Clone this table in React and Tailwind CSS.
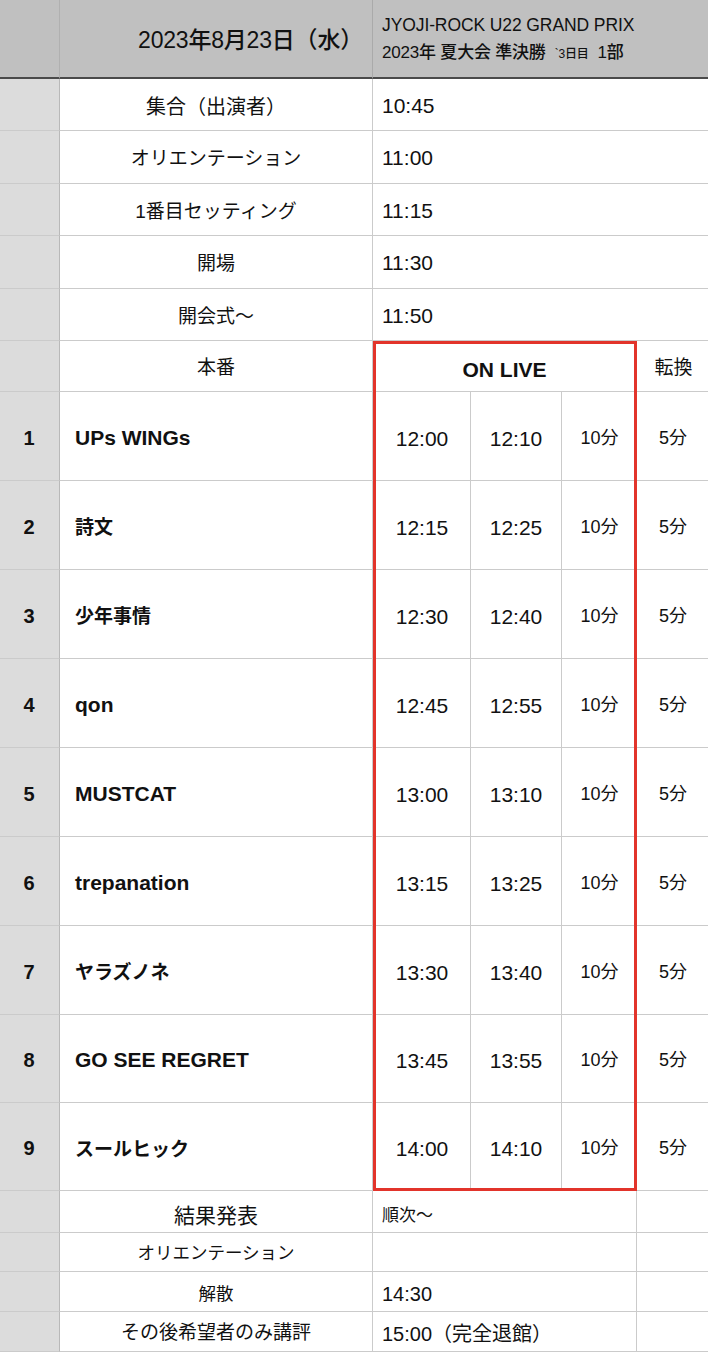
import React from "react";

const bands = [
  ["1", "UPs WINGs", "12:00", "12:10", true],
  ["2", "詩文", "12:15", "12:25", false],
  ["3", "少年事情", "12:30", "12:40", false],
  ["4", "qon", "12:45", "12:55", true],
  ["5", "MUSTCAT", "13:00", "13:10", true],
  ["6", "trepanation", "13:15", "13:25", true],
  ["7", "ヤラズノネ", "13:30", "13:40", false],
  ["8", "GO SEE REGRET", "13:45", "13:55", true],
  ["9", "スールヒック", "14:00", "14:10", false],
];

const topRows = [
  ["集合（出演者）", "text-[20px]", "10:45"],
  ["オリエンテーション", "text-[19px]", "11:00"],
  ["1番目セッティング", "text-[19px]", "11:15"],
  ["開場", "text-[19px]", "11:30"],
  ["開会式〜", "text-[19px]", "11:50"],
];

const line = "border-r border-b border-[#cbcbcb]";
const side = "bg-[#dcdcdc] border-r border-b border-r-[#b9b9b9] border-b-[#cbcbcb]";
const tmpl =
  "grid grid-cols-[60px_313px_98px_91px_75px_71px] grid-rows-[79px_52px_53px_52px_53px_52px_51px_89px_89px_89px_89px_89px_89px_89px_88px_88px_42px_39px_40px_40px]";

export default function App() {
  return (
    <div className="w-[708px] h-[1353px] bg-white text-[#111] font-['Liberation_Sans','Noto_Sans_CJK_JP',sans-serif] overflow-hidden">
      <div className="grid">
        <div className={`col-start-1 row-start-1 ${tmpl}`}>
          {/* header */}
          <div className="bg-[#c0c0c0] border-r border-r-[#b0b0b0] border-b-2 border-b-[#4a4a4a]" />
          <div className="bg-[#c0c0c0] border-r border-r-[#aaaaaa] border-b-2 border-b-[#4a4a4a] flex items-center justify-end pr-[9px] pt-[3px]">
            <span className="text-[23px] font-medium tracking-[-0.2px] whitespace-nowrap">2023年8月23日（水）</span>
          </div>
          <div className="col-span-4 bg-[#c0c0c0] border-b-2 border-b-[#4a4a4a] flex flex-col justify-center pl-[9px] pt-[3px]">
            <span className="text-[17.5px] leading-[27px] tracking-[-0.1px] whitespace-nowrap">JYOJI-ROCK U22 GRAND PRIX</span>
            <span className="text-[17px] leading-[27px] font-medium tracking-[-0.2px] whitespace-nowrap">
              2023年 夏大会 準決勝<span className="text-[12px] align-middle ml-[9px] mr-[9px]">`3日目</span>1部
            </span>
          </div>

          {topRows.map(([a, ac, b], i) => (
            <React.Fragment key={i}>
              <div className={side} />
              <div className={`${line} flex items-center justify-center whitespace-nowrap pt-[5px] ${ac}`}>{a}</div>
              <div className="col-span-4 border-b border-[#cbcbcb] flex items-center pl-[9px] pt-[2px] text-[21px]">{b}</div>
            </React.Fragment>
          ))}

          {/* 本番 row */}
          <div className={side} />
          <div className={`${line} flex items-center justify-center text-[19px] pt-[4px]`}>本番</div>
          <div className={`col-span-3 ${line} flex items-center justify-center text-[21px] font-bold pt-[7px]`}>ON LIVE</div>
          <div className="border-b border-[#cbcbcb] flex items-center justify-center text-[19px] pl-[2px] pt-[4px]">転換</div>

          {bands.map(([n, name, s, e, latin]) => (
            <React.Fragment key={n}>
              <div className={`${side} flex items-center justify-center text-[20px] font-bold pr-[1px] pt-[3px]`}>{n}</div>
              <div className={`${line} flex items-center pl-[15px] font-bold whitespace-nowrap ${latin ? "text-[21px] pt-[3px]" : "text-[19px] pt-[7px]"}`}>{name}</div>
              <div className={`${line} flex items-center justify-center text-[21px] pl-[1px] pt-[5px]`}>{s}</div>
              <div className={`${line} flex items-center justify-center text-[21px] pt-[5px]`}>{e}</div>
              <div className={`${line} flex items-center justify-center text-[18px] pl-[1px] pt-[4px]`}>10分</div>
              <div className="border-b border-[#cbcbcb] flex items-center justify-center text-[18px] pl-[1px] pt-[4px]">5分</div>
            </React.Fragment>
          ))}

          {[
            ["結果発表", "text-[21px] pt-[8px]", "順次〜", "text-[17px] pt-[8px]"],
            ["オリエンテーション", "text-[17.5px] pt-[2px]", "", "text-[17px]"],
            ["解散", "text-[17.5px] pt-[5px]", "14:30", "text-[20px] pt-[5px]"],
            ["その後希望者のみ講評", "text-[19px] pt-[4px]", "15:00（完全退館）", "text-[20px] pt-[4px]"],
          ].map(([a, ac, b, bc], i) => (
            <React.Fragment key={"b" + i}>
              <div className={side} />
              <div className={`${line} flex items-center justify-center whitespace-nowrap ${ac}`}>{a}</div>
              <div className={`col-span-3 ${line} flex items-center pl-[9px] whitespace-nowrap ${bc}`}>{b}</div>
              <div className="border-b border-[#cbcbcb]" />
            </React.Fragment>
          ))}
        </div>

        {/* red highlight box over the ON LIVE block */}
        <div className={`col-start-1 row-start-1 ${tmpl} pointer-events-none`}>
          <div className="col-start-3 col-span-3 row-start-7 row-span-10 border-[3px] border-[#e2342b]" />
        </div>
      </div>
    </div>
  );
}
